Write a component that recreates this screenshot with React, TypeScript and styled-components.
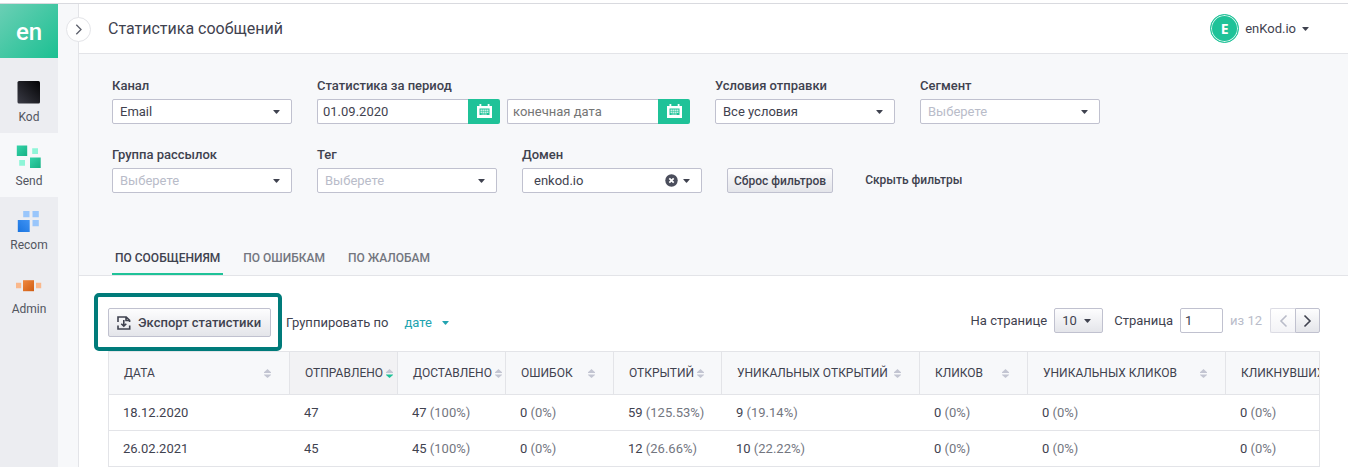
import React, { useId, useState } from "react";
import styled, { createGlobalStyle, css } from "styled-components";

const color = {
  text: "#3f424f",
  muted: "#73767f",
  faint: "#b9bcc9",
  border: "#c0c1cf",
  line: "#e3e4e8",
  panel: "#f7f8fa",
  rail: "#ecedf1",
  green: "#1fc298",
  teal: "#22a3b0",
  frame: "#007b7a",
};

const GlobalStyle = createGlobalStyle`
  *, *::before, *::after { box-sizing: border-box; }
  body {
    margin: 0;
    background: #fff;
    color: ${color.text};
    font: 13px/18px Roboto, "Liberation Sans", sans-serif;
  }
  button, input, select { font: inherit; color: inherit; margin: 0; }
  button { cursor: pointer; }
`;

/* ---------- shell ---------- */

const Page = styled.div`
  display: flex;
  flex-direction: column;
  min-height: 100vh;
  padding-top: 3px;
`;

const Shell = styled.div`
  flex: 1;
  display: flex;
  border-top: 1px solid #d9dadf;
`;

const Rail = styled.nav`
  flex: none;
  width: 58px;
  background: ${color.rail};
`;

const Logo = styled.a`
  display: flex;
  align-items: center;
  justify-content: center;
  height: 54px;
  margin-bottom: 11px;
  padding-top: 2px;
  background: linear-gradient(135deg, #6bcfb5, #1bc092);
  color: #fff;
  font-size: 24px;
  font-weight: 500;
  text-decoration: none;
`;

const RailItem = styled.a<{ $active?: boolean }>`
  display: flex;
  flex-direction: column;
  align-items: center;
  gap: 4px;
  height: 64px;
  padding-top: 11px;
  background: ${(p) => (p.$active ? color.panel : "transparent")};
  color: #52555f;
  font-size: 12px;
  text-decoration: none;
`;

const Gutter = styled.div`
  position: relative;
  flex: none;
  width: 21px;
  background: ${color.panel};
  border-right: 1px solid ${color.line};
`;

const Expand = styled.button`
  position: absolute;
  top: 13px;
  right: -13px;
  display: flex;
  align-items: center;
  justify-content: center;
  width: 25px;
  height: 25px;
  padding: 0;
  border: 1px solid ${color.line};
  border-radius: 50%;
  background: #fff;
`;

const Content = styled.div`
  flex: 1;
  min-width: 0;
`;

const Header = styled.header`
  display: flex;
  align-items: center;
  justify-content: space-between;
  height: 50px;
  padding: 0 39px 0 29px;
  border-bottom: 1px solid ${color.line};
`;

const Title = styled.h1`
  margin: 0;
  font-size: 16px;
  font-weight: 400;
  line-height: 24px;
`;

const Account = styled.button`
  display: flex;
  align-items: center;
  gap: 6px;
  padding: 0;
  border: 0;
  background: none;
`;

const Avatar = styled.span`
  display: flex;
  align-items: center;
  justify-content: center;
  width: 29px;
  height: 29px;
  border: 1px solid ${color.green};
  border-radius: 50%;
  background: ${color.green};
  box-shadow: inset 0 0 0 1px #d5f5ec;
  color: #fff;
  font-family: "Open Sans", sans-serif;
  font-size: 14px;
  font-weight: 700;
`;

/* ---------- controls ---------- */

const raised = css`
  border: 1px solid ${color.border};
  border-radius: 2px;
  background: linear-gradient(#fdfdfe, #e4e5ea);
`;

const Filters = styled.form`
  padding: 23px 33px 0;
  background: ${color.panel};
  border-bottom: 1px solid ${color.line};
`;

const FilterRow = styled.div`
  display: flex;
  flex-wrap: wrap;
  align-items: flex-end;
  gap: 22px 25px;
  margin-bottom: 22px;
`;

const Field = styled.div`
  display: flex;
  flex-direction: column;
  gap: 4px;
`;

const Label = styled.label`
  font-weight: 500;
`;

const SelectBox = styled.div<{ $width: number }>`
  position: relative;
  width: ${(p) => p.$width}px;
`;

const Select = styled.select<{ $empty?: boolean; $raised?: boolean; $inset?: number }>`
  display: block;
  appearance: none;
  width: 100%;
  height: 25px;
  padding: 0 20px 0 ${(p) => p.$inset ?? 7}px;
  border: 1px solid ${color.border};
  border-radius: 2px;
  background: #fff;
  color: ${(p) => (p.$empty ? color.faint : color.text)};
  ${(p) => p.$raised && raised}
`;

const SelectCaret = styled.span<{ $right: number; $accent?: boolean }>`
  position: absolute;
  inset: 0 ${(p) => p.$right}px 0 auto;
  display: flex;
  align-items: center;
  color: ${(p) => (p.$accent ? color.teal : "inherit")};
  pointer-events: none;
`;

const Clear = styled.button`
  position: absolute;
  top: 6px;
  right: 24px;
  display: flex;
  padding: 0;
  border: 0;
  background: none;
`;

const Dates = styled.div`
  display: flex;
  gap: 7px;
`;

const DateGroup = styled.div`
  display: flex;
  width: 183px;
`;

const TextInput = styled.input`
  min-width: 0;
  height: 25px;
  padding: 0 6px;
  border: 1px solid ${color.border};
  border-radius: 2px;
  background: #fff;
  &::placeholder { color: #757575; opacity: 1; }
`;

const DateInput = styled(TextInput)`
  flex: 1;
  padding: 0 5px;
  border-right: 0;
  border-radius: 2px 0 0 2px;
`;

const DateButton = styled.button`
  display: flex;
  align-items: center;
  justify-content: center;
  width: 32px;
  height: 25px;
  padding: 0 0 2px;
  border: 0;
  border-radius: 0 2px 2px 0;
  background: ${color.green};
`;

const Reset = styled.button`
  ${raised}
  height: 25px;
  padding: 0 6px;
  font-size: 12px;
  font-weight: 500;
`;

const HideFilters = styled.a`
  padding: 3px 7px 4px;
  color: inherit;
  font-size: 12px;
  font-weight: 500;
  text-decoration: none;
`;

const Tabs = styled.div`
  display: flex;
  gap: 17px;
  padding-top: 34px;
`;

const Tab = styled.button<{ $active: boolean }>`
  padding: 0 3px 6px;
  border: 0;
  border-bottom: 2px solid ${(p) => (p.$active ? color.green : "transparent")};
  background: none;
  color: ${(p) => (p.$active ? color.text : color.muted)};
  font-size: 12px;
  font-weight: 500;
`;

/* ---------- statistics ---------- */

const Stats = styled.main`
  padding: 32px 28px 0 29px;
`;

const Toolbar = styled.div`
  display: flex;
  justify-content: space-between;
  align-items: flex-start;
  margin-bottom: 14px;
`;

const ToolGroup = styled.div<{ $gap: number }>`
  display: flex;
  align-items: center;
  gap: ${(p) => p.$gap}px;
`;

const Highlight = styled.div`
  position: relative;
  &::after {
    content: "";
    position: absolute;
    inset: -15px -11px -14px -14px;
    border: 4px solid ${color.frame};
    border-radius: 5px;
    pointer-events: none;
  }
`;

const Export = styled.button`
  ${raised}
  display: flex;
  align-items: center;
  gap: 7px;
  height: 29px;
  padding: 0 9px 0 8px;
  font-weight: 500;
`;

const GroupBy = styled.div`
  display: flex;
  align-items: center;
  gap: 16px;
`;

const GroupSelect = styled.select`
  display: block;
  appearance: none;
  width: 100%;
  padding: 0;
  border: 0;
  background: none;
  color: ${color.teal};
`;

const PageLabel = styled.label`
  margin-left: 4px;
`;

const PageInput = styled(TextInput)`
  width: 43px;
  padding: 0 4px;
`;

const PageTotal = styled.span`
  color: ${color.faint};
`;

const Pager = styled.div`
  display: flex;
  margin-left: 1px;
`;

const PagerButton = styled.button`
  ${raised}
  display: flex;
  align-items: center;
  justify-content: center;
  width: 25px;
  height: 25px;
  padding: 0;
  &:first-child { border-right: 0; border-radius: 2px 0 0 2px; }
  &:last-child { border-radius: 0 2px 2px 0; }
  &:disabled { border-color: #dcdce4; background: linear-gradient(#fff, #f3f3f6); color: ${color.faint}; }
`;

const TableFrame = styled.div`
  overflow: hidden;
  border: solid ${color.line};
  border-width: 1px 1px 0;
`;

const Table = styled.table`
  width: 1315px;
  table-layout: fixed;
  border-collapse: separate;
  border-spacing: 0;
`;

const HeadCell = styled.th<{ $sorted: boolean; $width: number }>`
  width: ${(p) => p.$width}px;
  height: 43px;
  padding: 0 18px 0 15px;
  border: solid ${color.line};
  border-width: 0 1px 1px 0;
  background: ${(p) => (p.$sorted ? "#f2f2f4" : color.panel)};
  font-weight: 400;
`;

const SortButton = styled.button`
  display: flex;
  align-items: center;
  justify-content: space-between;
  gap: 3px;
  width: 100%;
  padding: 0;
  border: 0;
  background: none;
  font-size: 12px;
  white-space: nowrap;
`;

const Cell = styled.td`
  height: 36px;
  padding: 0 14px;
  border-bottom: 1px solid ${color.line};
  white-space: nowrap;
`;

const Share = styled.span`
  color: ${color.muted};
`;

/* ---------- drawings ---------- */

const Caret = () => (
  <svg width="7" height="4" viewBox="0 0 7 4" fill="currentColor" aria-hidden="true">
    <path d="M.6 0h5.8q.6 0 .2.5L4 3.6q-.5.5-1 0L.4.5Q0 0 .6 0z" />
  </svg>
);

const Chevron = ({ left }: { left?: boolean }) => (
  <svg width="9" height="14" viewBox="0 0 9 14" fill="none" stroke="currentColor" strokeWidth="1.6" aria-hidden="true">
    <path d={left ? "M7.5 1.5 2 7l5.5 5.5" : "M1.5 1.5 7 7l-5.5 5.5"} />
  </svg>
);

const ExpandIcon = () => (
  <svg width="7" height="11" viewBox="0 0 7 11" fill="none" stroke="#5c5f6b" strokeWidth="1.3" aria-hidden="true">
    <path d="M1.3 .8 6 5.5 1.3 10.2" />
  </svg>
);

const CalendarIcon = () => (
  <svg width="15" height="14" viewBox="0 0 15 14" aria-hidden="true">
    <path fill="#fff" d="M2.500 0h1.800v2h6.400V0h1.800v2H15v12H0V2h2.500z" />
    <path fill={color.green} d="M2.500 4.500h10V11h-10z" />
    <path fill="#c4f1e4" d="M3.500 5.500h8v2h-8zM3.500 8h8v1h-8zM4.500 9.500h5.500v1H4.500z" />
    <path stroke={color.green} strokeWidth=".4" d="M5.500 5v5.500M7.500 5v5.500M9.500 5v5.500" />
  </svg>
);

const ClearIcon = () => (
  <svg width="13" height="13" viewBox="0 0 13 13" aria-hidden="true">
    <circle cx="6.5" cy="6.5" r="6.2" fill="#4b4e5c" />
    <path d="m4.3 4.3 4.4 4.4M8.700 4.3 4.3 8.700" stroke="#fff" strokeWidth="1.7" />
  </svg>
);

const ExportIcon = () => (
  <svg width="14" height="14" viewBox="0 0 14 14" fill="none" stroke="currentColor" strokeWidth="1.6" aria-hidden="true">
    <path d="M1 6V1h8.200L12.600 4.300V6M9 1v3.500h3.500M1 9.500V13h11.700V9.500" />
    <path d="M6.800 4v6M4.300 7.700l2.500 2.500 2.500-2.500" />
  </svg>
);

const SortIcon = ({ desc }: { desc: boolean }) => (
  <svg width="7" height="9" viewBox="0 0 7 9" fill="#c3c5d2" style={{ flex: "none" }} aria-hidden="true">
    <path d="M3.500 0 7 3.200V4H0v-.8z" />
    <path d="M0 5.500h7v.5L3.500 9 0 6z" fill={desc ? color.green : undefined} />
  </svg>
);

const HiddenDefs = styled.svg`
  position: absolute;
`;

const Gradients = () => (
  <HiddenDefs width="0" height="0" aria-hidden="true">
    <defs>
      <linearGradient id="ink" x1="0" y1="1" x2="1" y2="0"><stop stopColor="#3a3b45" /><stop offset="1" stopColor="#030305" /></linearGradient>
      <linearGradient id="mint" x1="0" y1="0" x2="1" y2="1"><stop stopColor="#34d3a9" /><stop offset="1" stopColor="#17b184" /></linearGradient>
      <linearGradient id="sky" x1="1" y1="0" x2="0" y2="1"><stop stopColor="#3f93f3" /><stop offset="1" stopColor="#1a74e0" /></linearGradient>
      <linearGradient id="rust" x1="0" y1="0" x2="1" y2="1"><stop stopColor="#f0883f" /><stop offset="1" stopColor="#cf5c12" /></linearGradient>
    </defs>
  </HiddenDefs>
);

const RailIcon = ({ children }: { children: React.ReactNode }) => (
  <svg width="26" height="24" viewBox="0 0 26 24" aria-hidden="true">{children}</svg>
);

const railItems = [
  {
    name: "Kod",
    icon: <rect x="1.5" y="1" width="22.5" height="22.5" rx="1.5" fill="url(#ink)" />,
  },
  {
    name: "Send",
    active: true,
    icon: (
      <>
        <path fill="url(#mint)" d="M.8 1.500h10.400V12H.8z" />
        <path fill="url(#mint)" d="M14 13.500h10.700V24H14z" />
        <path fill="#8ff5d8" d="M16.200 4.300H22V10h-5.800zM3.200 16H9v5.700H3.200z" />
      </>
    ),
  },
  {
    name: "Recom",
    icon: (
      <>
        <path fill="url(#sky)" d="M1.800 12h11.900v12H1.800z" />
        <path fill="#99c6fb" d="M7.200 3h6.300v6.300H7.200zM16.500 3h6.300v6.300h-6.300zM16.500 12h6.300v6.300h-6.300z" />
      </>
    ),
  },
  {
    name: "Admin",
    icon: (
      <>
        <path fill="url(#rust)" d="M7 8.200h11v11H7z" />
        <path fill="#fab88c" d="M0 10.800h5.200v5.500H0zM20 10.800h5.200v5.500H20z" />
      </>
    ),
  },
];

/* ---------- pieces ---------- */

type SelectFieldProps = { label: string; value?: string; clearable?: boolean };

const SelectField = ({ label, value, clearable }: SelectFieldProps) => {
  const id = useId();
  return (
    <Field>
      <Label htmlFor={id}>{label}</Label>
      <SelectBox $width={180}>
        <Select id={id} $empty={!value} $inset={clearable ? 11 : 7}>
          <option>{value ?? "Выберете"}</option>
        </Select>
        {clearable && (
          <Clear type="button" aria-label="Очистить"><ClearIcon /></Clear>
        )}
        <SelectCaret $right={12}><Caret /></SelectCaret>
      </SelectBox>
    </Field>
  );
};

const columns = [
  { title: "ДАТА", width: 181 },
  { title: "ОТПРАВЛЕНО", width: 108 },
  { title: "ДОСТАВЛЕНО", width: 108 },
  { title: "ОШИБОК", width: 108 },
  { title: "ОТКРЫТИЙ", width: 108 },
  { title: "УНИКАЛЬНЫХ ОТКРЫТИЙ", width: 198 },
  { title: "КЛИКОВ", width: 108 },
  { title: "УНИКАЛЬНЫХ КЛИКОВ", width: 198 },
  { title: "КЛИКНУВШИХ", width: 198 },
];

const rows = [
  [["18.12.2020"], ["47"], ["47", "100%"], ["0", "0%"], ["59", "125.53%"], ["9", "19.14%"], ["0", "0%"], ["0", "0%"], ["0", "0%"]],
  [["26.02.2021"], ["45"], ["45", "100%"], ["0", "0%"], ["12", "26.66%"], ["10", "22.22%"], ["0", "0%"], ["0", "0%"], ["0", "0%"]],
];

const tabs = ["ПО СООБЩЕНИЯМ", "ПО ОШИБКАМ", "ПО ЖАЛОБАМ"];

export default function App() {
  const [tab, setTab] = useState(0);

  return (
    <Page>
      <GlobalStyle />
      <Gradients />
      <Shell>
        <Rail>
          <Logo href="#">en</Logo>
          {railItems.map((item) => (
            <RailItem key={item.name} href="#" $active={item.active}>
              <RailIcon>{item.icon}</RailIcon>
              {item.name}
            </RailItem>
          ))}
        </Rail>
        <Gutter>
          <Expand type="button" aria-label="Развернуть меню"><ExpandIcon /></Expand>
        </Gutter>
        <Content>
          <Header>
            <Title>Статистика сообщений</Title>
            <Account type="button">
              <Avatar>E</Avatar>
              enKod.io
              <Caret />
            </Account>
          </Header>

          <Filters>
            <FilterRow>
              <SelectField label="Канал" value="Email" />
              <Field>
                <Label htmlFor="date-from">Статистика за период</Label>
                <Dates>
                  <DateGroup>
                    <DateInput id="date-from" defaultValue="01.09.2020" />
                    <DateButton type="button" aria-label="Выбрать начальную дату"><CalendarIcon /></DateButton>
                  </DateGroup>
                  <DateGroup>
                    <DateInput aria-label="Конечная дата" placeholder="конечная дата" />
                    <DateButton type="button" aria-label="Выбрать конечную дату"><CalendarIcon /></DateButton>
                  </DateGroup>
                </Dates>
              </Field>
              <SelectField label="Условия отправки" value="Все условия" />
              <SelectField label="Сегмент" />
            </FilterRow>
            <FilterRow>
              <SelectField label="Группа рассылок" />
              <SelectField label="Тег" />
              <SelectField label="Домен" value="enkod.io" clearable />
              <Reset type="reset">Сброс фильтров</Reset>
              <HideFilters href="#">Скрыть фильтры</HideFilters>
            </FilterRow>
            <Tabs role="tablist">
              {tabs.map((name, i) => (
                <Tab key={name} type="button" role="tab" aria-selected={i === tab} $active={i === tab} onClick={() => setTab(i)}>
                  {name}
                </Tab>
              ))}
            </Tabs>
          </Filters>

          <Stats>
            <Toolbar>
              <ToolGroup $gap={15}>
                <Highlight>
                  <Export type="button"><ExportIcon />Экспорт статистики</Export>
                </Highlight>
                <GroupBy>
                  <label htmlFor="group-by">Группировать по</label>
                  <SelectBox $width={45}>
                    <GroupSelect id="group-by"><option>дате</option></GroupSelect>
                    <SelectCaret $right={0} $accent><Caret /></SelectCaret>
                  </SelectBox>
                </GroupBy>
              </ToolGroup>
              <ToolGroup $gap={7}>
                <label htmlFor="per-page">На странице</label>
                <SelectBox $width={49}>
                  <Select id="per-page" $raised><option>10</option></Select>
                  <SelectCaret $right={12}><Caret /></SelectCaret>
                </SelectBox>
                <PageLabel htmlFor="page">Страница</PageLabel>
                <PageInput id="page" defaultValue="1" />
                <PageTotal>из 12</PageTotal>
                <Pager>
                  <PagerButton type="button" disabled aria-label="Предыдущая страница"><Chevron left /></PagerButton>
                  <PagerButton type="button" aria-label="Следующая страница"><Chevron /></PagerButton>
                </Pager>
              </ToolGroup>
            </Toolbar>

            <TableFrame>
              <Table>
                <thead>
                  <tr>
                    {columns.map((c, i) => (
                      <HeadCell key={c.title} scope="col" $sorted={i === 1} $width={c.width}>
                        <SortButton type="button">{c.title}<SortIcon desc={i === 1} /></SortButton>
                      </HeadCell>
                    ))}
                  </tr>
                </thead>
                <tbody>
                  {rows.map((row) => (
                    <tr key={row[0][0]}>
                      {row.map(([value, share], i) => (
                        <Cell key={i}>
                          {value}
                          {share && <Share> ({share})</Share>}
                        </Cell>
                      ))}
                    </tr>
                  ))}
                </tbody>
              </Table>
            </TableFrame>
          </Stats>
        </Content>
      </Shell>
    </Page>
  );
}
